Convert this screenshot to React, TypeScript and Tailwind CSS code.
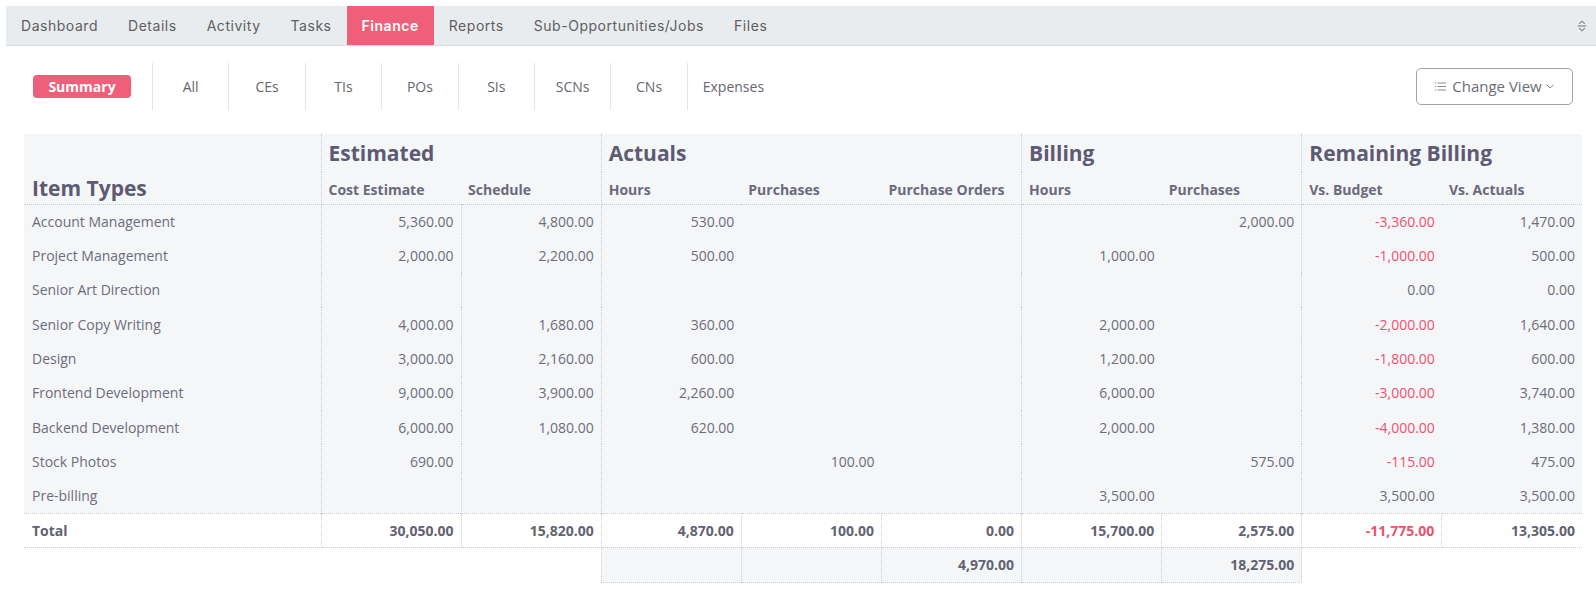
import React from 'react';

const tabs = ['Dashboard', 'Details', 'Activity', 'Tasks', 'Finance', 'Reports', 'Sub-Opportunities/Jobs', 'Files'];
const subTabs = ['All', 'CEs', 'TIs', 'POs', 'SIs', 'SCNs', 'CNs'];

const rows: string[][] = [
  ['Account Management', '5,360.00', '4,800.00', '530.00', '', '', '', '2,000.00', '-3,360.00', '1,470.00'],
  ['Project Management', '2,000.00', '2,200.00', '500.00', '', '', '1,000.00', '', '-1,000.00', '500.00'],
  ['Senior Art Direction', '', '', '', '', '', '', '', '0.00', '0.00'],
  ['Senior Copy Writing', '4,000.00', '1,680.00', '360.00', '', '', '2,000.00', '', '-2,000.00', '1,640.00'],
  ['Design', '3,000.00', '2,160.00', '600.00', '', '', '1,200.00', '', '-1,800.00', '600.00'],
  ['Frontend Development', '9,000.00', '3,900.00', '2,260.00', '', '', '6,000.00', '', '-3,000.00', '3,740.00'],
  ['Backend Development', '6,000.00', '1,080.00', '620.00', '', '', '2,000.00', '', '-4,000.00', '1,380.00'],
  ['Stock Photos', '690.00', '', '', '100.00', '', '', '575.00', '-115.00', '475.00'],
  ['Pre-billing', '', '', '', '', '', '3,500.00', '', '3,500.00', '3,500.00'],
];

const total = ['Total', '30,050.00', '15,820.00', '4,870.00', '100.00', '0.00', '15,700.00', '2,575.00', '-11,775.00', '13,305.00'];

const groups = [
  { label: 'Estimated', cols: ['Cost Estimate', 'Schedule'] },
  { label: 'Actuals', cols: ['Hours', 'Purchases', 'Purchase Orders'] },
  { label: 'Billing', cols: ['Hours', 'Purchases'] },
  { label: 'Remaining Billing', cols: ['Vs. Budget', 'Vs. Actuals'] },
];

// body rows only show dividers at group edges and inside "Estimated"
const bodyDividers = [0, 1, 2, 5, 7];

const SortIcon = () => (
  <svg width="10" height="12" viewBox="0 0 10 12" fill="none" stroke="#7a7d85" strokeWidth="1.1">
    <path d="M2.2 3.8 L5 1.2 L7.8 3.8" />
    <path d="M0.8 6 H9.2" />
    <path d="M2.2 8.2 L5 10.8 L7.8 8.2" />
  </svg>
);

const ListIcon = () => (
  <svg width="11" height="9" viewBox="0 0 11 9" fill="#8a8a8a">
    <rect x="0" y="0.5" width="1.2" height="1" />
    <rect x="0" y="4" width="1.2" height="1" />
    <rect x="0" y="7.5" width="1.2" height="1" />
    <rect x="2.6" y="0.5" width="8.4" height="1" />
    <rect x="2.6" y="4" width="8.4" height="1" />
    <rect x="2.6" y="7.5" width="8.4" height="1" />
  </svg>
);

const Chevron = () => (
  <svg width="8" height="5" viewBox="0 0 8 5" fill="none" stroke="#8a8a8a" strokeWidth="1">
    <path d="M0.6 0.7 L4 4 L7.4 0.7" />
  </svg>
);

const line = 'border-dotted border-[#c9ccd4]';

export default function App() {
  return (
    <div className="min-h-[600px] bg-white pt-[6px] font-['Open_Sans',sans-serif]">
      {/* top tab bar */}
      <div className="ml-[6px] flex h-[40px] items-stretch border-b border-[#d9dce1] bg-[#e9ecef]">
        {tabs.map((t) =>
          t === 'Finance' ? (
            <div
              key={t}
              className="flex items-center bg-[#f05f79] px-[15px] font-['Inter',sans-serif] text-[14px] font-semibold tracking-[0.038em] text-white"
            >
              {t}
            </div>
          ) : (
            <div
              key={t}
              className="flex items-center px-[15px] font-['Inter',sans-serif] text-[14px] tracking-[0.038em] text-[#5e5e5e]"
            >
              {t}
            </div>
          ),
        )}
        <div className="ml-auto flex items-center pr-[9px]">
          <SortIcon />
        </div>
      </div>

      {/* sub navigation */}
      <div className="mt-[17px] flex h-[47px] items-stretch pl-[33px] pr-[23px]">
        <div className="flex items-center pr-[21px]">
          <div className="flex h-[23px] w-[98px] items-center justify-center rounded-[4px] bg-[#f05f79] text-[14px] font-bold text-white">
            Summary
          </div>
        </div>
        {subTabs.map((s) => (
          <div key={s} className="flex w-[76.4px] items-center justify-center border-l border-[#e4e4e6] text-[14px] text-[#666670]">
            {s}
          </div>
        ))}
        <div className="flex items-center border-l border-[#e4e4e6] px-[15px] text-[14px] text-[#666670]">Expenses</div>
        <div className="ml-auto flex items-center">
          <button className="flex h-[37px] w-[157px] items-center justify-center gap-[6px] rounded-[5px] border border-[#a3a3a8] bg-white text-[15px] text-[#6c6c74]">
            <ListIcon />
            <span className="-mr-[2px]">Change View</span>
            <Chevron />
          </button>
        </div>
      </div>

      {/* finance table */}
      <div className="ml-[24px] mt-[24px] w-[1558px]">
        <table className="w-full table-fixed border-collapse">
          <colgroup>
            <col className="w-[297px]" />
            {Array.from({ length: 9 }).map((_, i) => (
              <col key={i} />
            ))}
          </colgroup>
          <thead className="bg-[#f5f6f8]">
            <tr className="h-[38px]">
              <th
                rowSpan={2}
                className={`border-r border-b ${line} px-2 pb-[2px] text-left align-bottom text-[21px] font-bold leading-[28px] text-[#5d5a74]`}
              >
                Item Types
              </th>
              {groups.map((g, gi) => (
                <th
                  key={g.label}
                  colSpan={g.cols.length}
                  className={`px-[7px] text-left align-middle text-[21px] font-bold leading-[28px] text-[#5d5a74] ${
                    gi < 3 ? `border-r ${line}` : ''
                  }`}
                >
                  {g.label}
                </th>
              ))}
            </tr>
            <tr className="h-[32px]">
              {groups.map((g, gi) =>
                g.cols.map((c, ci) => (
                  <th
                    key={g.label + c}
                    className={`border-b ${line} px-[7px] pb-[5px] text-left align-bottom text-[14px] font-bold leading-[18px] whitespace-nowrap text-[#6a6a7c] ${
                      ci === g.cols.length - 1 && gi < 3 ? 'border-r' : ''
                    }`}
                  >
                    {c}
                  </th>
                )),
              )}
            </tr>
          </thead>
          <tbody className="bg-[#f5f6f8]">
            {rows.map((r) => (
              <tr key={r[0]} className="h-[34.35px]">
                {r.map((v, i) => (
                  <td
                    key={i}
                    className={`text-[14px] ${i === 0 ? 'px-2 text-left' : 'px-[7px] text-right'} ${
                      v.startsWith('-') ? 'text-[#f0506e]' : 'text-[#6c6c7c]'
                    } ${bodyDividers.includes(i) ? `border-r ${line}` : ''}`}
                  >
                    {v}
                  </td>
                ))}
              </tr>
            ))}
            <tr className="h-[34.4px] bg-white">
              {total.map((v, i) => (
                <td
                  key={i}
                  className={`border-y ${line} px-[7px] text-[14px] font-bold ${i === 0 ? 'pl-2 text-left' : 'text-right'} ${
                    v.startsWith('-') ? 'text-[#f0506e]' : 'text-[#626272]'
                  } ${i < 9 ? 'border-r' : ''}`}
                >
                  {v}
                </td>
              ))}
            </tr>
            <tr className="h-[35px] bg-white">
              <td colSpan={3} className="bg-white" />
              {['', '', '4,970.00', '', '18,275.00'].map((v, i) => (
                <td
                  key={i}
                  className={`border-x border-b ${line} bg-[#f5f6f8] px-[7px] text-right text-[14px] font-bold text-[#626272]`}
                >
                  {v}
                </td>
              ))}
              <td colSpan={2} className="bg-white" />
            </tr>
          </tbody>
        </table>
      </div>
    </div>
  );
}
